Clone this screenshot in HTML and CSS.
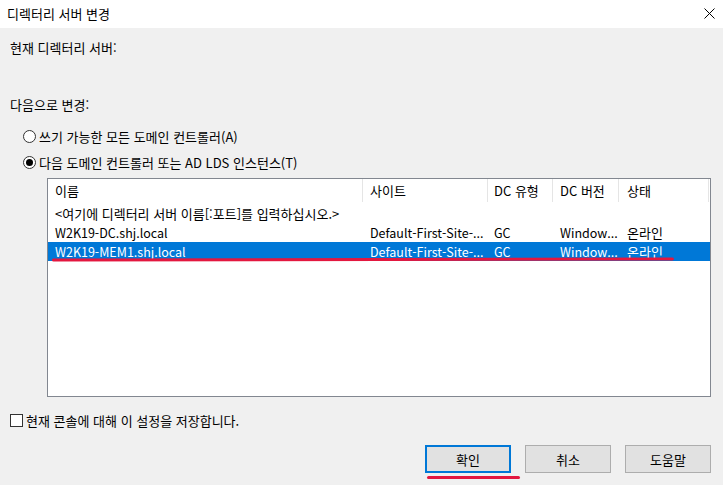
FILE: index.html
```html
<!DOCTYPE html>
<html lang="ko">
<head>
<meta charset="utf-8">
<title>디렉터리 서버 변경</title>
<link rel="stylesheet" href="styles.css">
</head>
<body>
<div class="dialog">
  <div class="titlebar">
    <span class="title">디렉터리 서버 변경</span>
    <svg class="close" width="11" height="11" viewBox="0 0 11 11"><path d="M0.5 0.5 L10.5 10.5 M10.5 0.5 L0.5 10.5" stroke="#000" stroke-width="1"/></svg>
  </div>
  <div class="content">
    <div class="line current">현재 디렉터리 서버:</div>
    <div class="line changeto">다음으로 변경:</div>
    <div class="radio r1"><span class="circle"></span><span>쓰기 가능한 모든 도메인 컨트롤러(A)</span></div>
    <div class="radio r2"><span class="circle checked"></span><span>다음 도메인 컨트롤러 또는 AD LDS 인스턴스(T)</span></div>
    <div class="list">
      <div class="row header">
        <div class="c c1">이름</div>
        <div class="c c2">사이트</div>
        <div class="c c3">DC 유형</div>
        <div class="c c4">DC 버전</div>
        <div class="c c5">상태</div>
        <div class="c c6"></div>
      </div>
      <div class="row"><div class="c wide">&lt;여기에 디렉터리 서버 이름[:포트]를 입력하십시오.&gt;</div></div>
      <div class="row">
        <div class="c c1 lat">W2K19-DC.shj.local</div>
        <div class="c c2 lat">Default-First-Site-...</div>
        <div class="c c3 lat">GC</div>
        <div class="c c4 lat">Window...</div>
        <div class="c c5">온라인</div>
      </div>
      <div class="row selected">
        <div class="c c1 lat">W2K19-MEM1.shj.local</div>
        <div class="c c2 lat">Default-First-Site-...</div>
        <div class="c c3 lat">GC</div>
        <div class="c c4 lat">Window...</div>
        <div class="c c5">온라인</div>
      </div>
      <div class="mark mark-row"></div>
    </div>
    <div class="check"><span class="box"></span><span>현재 콘솔에 대해 이 설정을 저장합니다.</span></div>
    <div class="buttons">
      <div class="btn default">확인<div class="mark mark-btn"></div></div>
      <div class="btn">취소</div>
      <div class="btn">도움말</div>
    </div>
  </div>
</div>
</body>
</html>
```
FILE: styles.css
```css
* { box-sizing: border-box; }
html, body { margin: 0; padding: 0; }
body {
  width: 723px;
  height: 485px;
  overflow: hidden;
  background: #f0f0f0;
  font-family: "Noto Sans CJK KR", "Noto Sans", sans-serif;
  font-size: 13px;
  color: #000;
}
.dialog { width: 723px; height: 485px; }
.titlebar {
  height: 28px;
  background: #fff;
  display: flex;
  align-items: center;
  justify-content: space-between;
  padding: 0 8px 2px 7px;
}
.content { padding: 0 12px 0 10px; }
.line { height: 16px; line-height: 16px; }
.current { margin-top: 12px; }
.changeto { margin-top: 41px; }
.radio {
  height: 20px;
  display: flex;
  align-items: center;
  padding-left: 13px;
  gap: 3px;
}
.r1 { margin-top: 13px; }
.r2 { margin-top: 6px; }
.circle {
  width: 13px; height: 13px;
  border: 1px solid #333;
  border-radius: 50%;
  background: #fff;
  position: relative;
  flex: none;
}
.circle.checked::after {
  content: "";
  position: absolute;
  left: 2px; top: 2px;
  width: 7px; height: 7px;
  border-radius: 50%;
  background: #000;
}
.list {
  position: relative;
  margin-top: 6px;
  margin-left: 37px;
  width: 664px;
  height: 219px;
  background: #fff;
  border: 1px solid #828790;
}
.row {
  display: flex;
  height: 19px;
  line-height: 19px;
  white-space: nowrap;
}
.row.header { height: 25px; line-height: 23px; }
.c { overflow: visible; flex: none; }
.c1 { width: 315px; padding-left: 7px; }
.c2 { width: 125px; padding-left: 7px; }
.c3 { width: 65px; padding-left: 6px; }
.c4 { width: 66px; padding-left: 7px; }
.c5 { width: 90px; padding-left: 8px; }
.c6 { width: 1px; }
.lat { font-size: 12.5px; }
.header .c { border-right: 1px solid #e5e5e5; height: 23px; }
.header .c6 { border-right: none; }
.wide { padding-left: 7px; }
.selected { background: #0078d7; color: #fff; }
.mark {
  position: absolute;
  height: 3px;
  background: #e3173f;
  border-radius: 2px;
}
.mark-row { left: 4px; top: 79px; width: 622px; transform: rotate(-0.1deg); }
.check {
  margin-top: 15px;
  height: 16px;
  display: flex;
  align-items: center;
  gap: 3px;
}
.box {
  width: 13px; height: 13px;
  border: 1px solid #333;
  background: #fff;
  flex: none;
}
.buttons {
  margin-top: 17px;
  display: flex;
  justify-content: flex-end;
  gap: 14px;
}
.btn {
  position: relative;
  width: 86px;
  height: 28px;
  background: #e1e1e1;
  border: 1px solid #adadad;
  display: flex;
  align-items: center;
  justify-content: center;
}
.btn.default { border: 2px solid #0078d7; }
.mark-btn { left: 0; top: 29px; width: 93px; }
```
